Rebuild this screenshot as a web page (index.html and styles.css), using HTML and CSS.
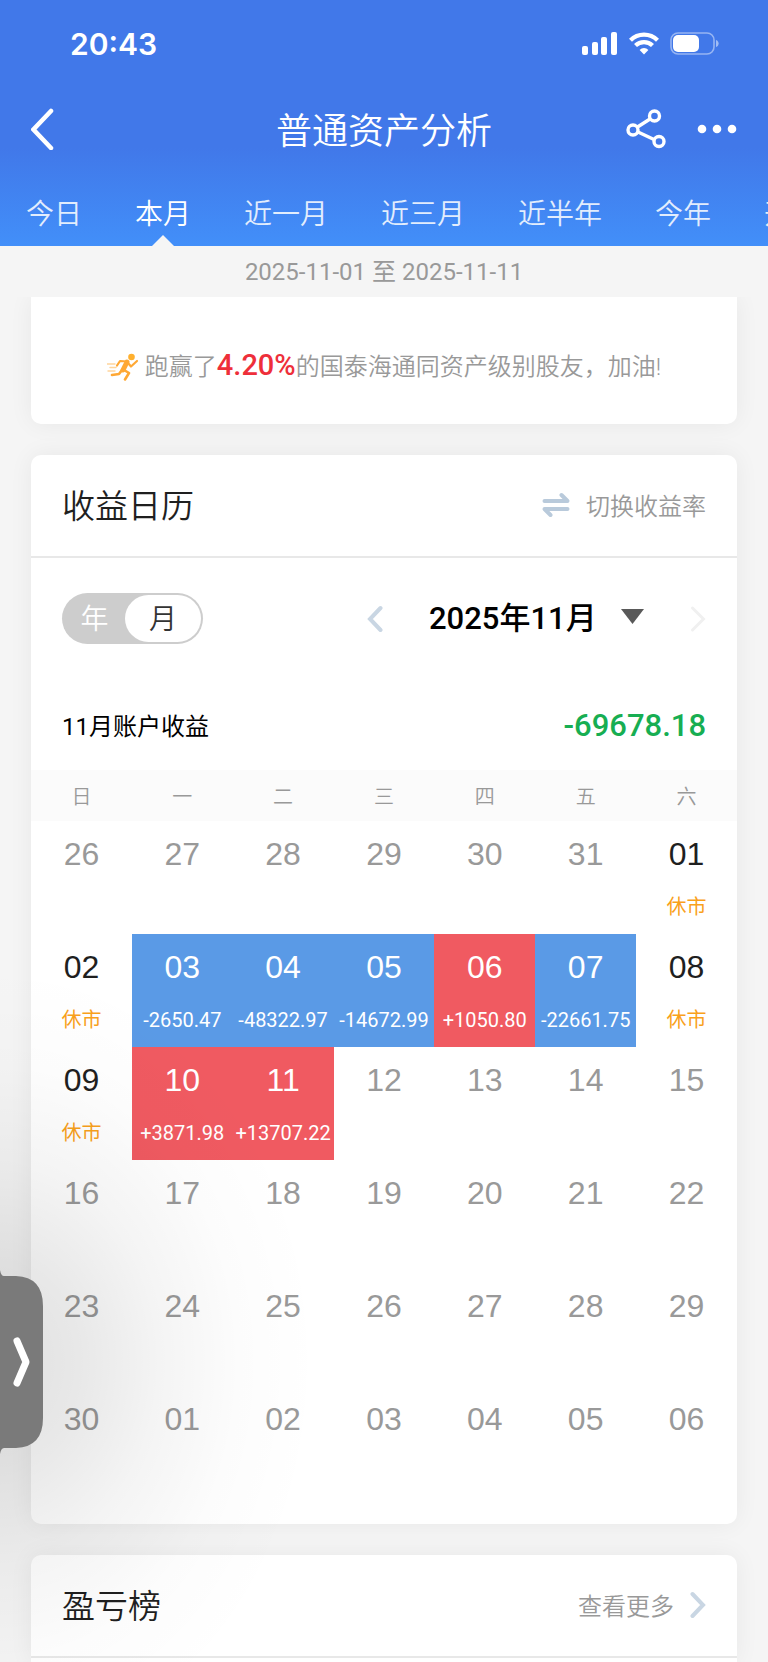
FILE: index.html
```html
<!DOCTYPE html>
<html lang="zh-CN">
<head>
    <meta charset="UTF-8">
    <meta name="viewport" content="width=device-width, initial-scale=1">
    <title>普通资产分析</title>
    <link rel="stylesheet" href="styles.css">
</head>
<body>
    <header class="header">
        <div class="status-bar">
            <span class="time">20:43</span>
            <div class="status-icons">
                <svg width="36" height="24" viewBox="0 0 36 24" fill="#fff">
                    <rect x="0" y="14" width="6" height="9" rx="2"/>
                    <rect x="10" y="10" width="6" height="13" rx="2"/>
                    <rect x="19" y="5" width="6" height="18" rx="2"/>
                    <rect x="29" y="0" width="6" height="23" rx="2"/>
                </svg>
                <svg width="30" height="24" viewBox="0 0 30 24" fill="none" stroke="#fff" stroke-width="4.2">
                    <path d="M1.5 8.2a19 19 0 0 1 27 0"/>
                    <path d="M6.5 13.6a12 12 0 0 1 17 0"/>
                    <path d="M15 22.5l-4.4-4.6a6.3 6.3 0 0 1 8.8 0z" fill="#fff" stroke="none"/>
                </svg>
                <svg width="49" height="24" viewBox="0 0 49 24">
                    <rect x="1" y="1" width="43" height="21" rx="7" fill="none" stroke="#fff" stroke-opacity=".45" stroke-width="1.6"/>
                    <rect x="3" y="3" width="26" height="17" rx="5" fill="#fff"/>
                    <path d="M46 8c3.5 1 3.5 6 0 7z" fill="#fff" fill-opacity=".5"/>
                </svg>
            </div>
        </div>
        <div class="nav-bar">
            <button class="icon-btn nav-back" aria-label="返回">
                <svg width="24" height="42" viewBox="0 0 24 42" fill="none" stroke="#fff" stroke-width="4.5" stroke-linecap="round">
                    <path d="M20 3L2.5 21.5L20 40"/>
                </svg>
            </button>
            <h1 class="title">普通资产分析</h1>
            <div class="nav-actions">
                <button class="icon-btn" aria-label="分享">
                    <svg width="40" height="42" viewBox="0 0 40 42" fill="none" stroke="#fff" stroke-width="3.4">
                        <circle cx="7" cy="22" r="5"/>
                        <circle cx="28.5" cy="8" r="5"/>
                        <circle cx="33" cy="33.5" r="5"/>
                        <path d="M11.5 19L24 11M12 24L28 31.5"/>
                    </svg>
                </button>
                <button class="icon-btn" aria-label="更多">
                    <svg width="40" height="10" viewBox="0 0 40 10" fill="#fff">
                        <circle cx="5" cy="5" r="4.3"/>
                        <circle cx="20" cy="5" r="4.3"/>
                        <circle cx="35" cy="5" r="4.3"/>
                    </svg>
                </button>
            </div>
        </div>
        <nav class="tabs">
            <a href="#" class="tab">今日</a>
            <a href="#" class="tab active">本月</a>
            <a href="#" class="tab">近一月</a>
            <a href="#" class="tab">近三月</a>
            <a href="#" class="tab">近半年</a>
            <a href="#" class="tab">今年</a>
            <a href="#" class="tab">开</a>
        </nav>
    </header>

    <p class="date-range">2025-11-01 至 2025-11-11</p>

    <main class="content">
        <section class="card rank">
            <svg width="32" height="28" viewBox="0 0 32 28" fill="none" stroke="#ffa834" stroke-linecap="round" stroke-linejoin="round">
                <circle cx="24.5" cy="4" r="3.3" fill="#ffb02e" stroke="none"/>
                <path d="M20 9L16 17" stroke-width="5"/>
                <path d="M20 8.5L13 8L10 12.5M21 10L24 13.5L30 8" stroke-width="2.2"/>
                <path d="M15 17L12 21L5 22M17 17L22 20L18 26.5" stroke-width="2.6"/>
                <path d="M0 11h8M3 14.5h6M1 18h7" stroke="#ffd59c" stroke-width="1.4"/>
            </svg>
            <p class="rank-text">跑赢了<strong>4.20%</strong>的国泰海通同资产级别股友，加油!</p>
        </section>

        <section class="card">
            <div class="card-header">
                <h2>收益日历</h2>
                <button class="link-btn">
                    <svg width="28" height="26" viewBox="0 0 28 26" fill="none" stroke="#b9cadb" stroke-width="4" stroke-linecap="round" stroke-linejoin="round">
                        <path d="M2.5 9H25.5L19.5 3M25.5 17H2.5L8.5 23"/>
                    </svg>
                    切换收益率
                </button>
            </div>

            <div class="controls">
                <div class="toggle">
                    <button class="toggle-item">年</button>
                    <button class="toggle-item selected">月</button>
                </div>
                <div class="month-nav">
                    <button class="icon-btn" aria-label="上个月">
                        <svg width="16" height="28" viewBox="0 0 16 28" fill="none" stroke="#c9d6e3" stroke-width="4" stroke-linecap="round">
                            <path d="M13.5 3L3 14L13.5 25"/>
                        </svg>
                    </button>
                    <label class="month-picker">
                        <select class="month-select" aria-label="选择月份">
                            <option>2025年11月</option>
                        </select>
                        <svg width="23" height="20" viewBox="0 0 23 20" fill="#595959">
                            <path d="M0 0h23L11.5 15z"/>
                        </svg>
                    </label>
                    <button class="icon-btn" aria-label="下个月" disabled>
                        <svg width="16" height="28" viewBox="0 0 16 28" fill="none" stroke="#f0f0f0" stroke-width="3" stroke-linecap="round">
                            <path d="M2.5 3L13.5 14L2.5 25"/>
                        </svg>
                    </button>
                </div>
            </div>

            <div class="summary">
                <span class="summary-label">11月账户收益</span>
                <span class="summary-value">-69678.18</span>
            </div>

            <table class="calendar">
                <thead>
                    <tr><th>日</th><th>一</th><th>二</th><th>三</th><th>四</th><th>五</th><th>六</th></tr>
                </thead>
                <tbody>
                    <tr>
                        <td>26</td>
                        <td>27</td>
                        <td>28</td>
                        <td>29</td>
                        <td>30</td>
                        <td>31</td>
                        <td class="closed">01<span>休市</span></td>
                    </tr>
                    <tr>
                        <td class="closed">02<span>休市</span></td>
                        <td class="loss">03<span>-2650.47</span></td>
                        <td class="loss">04<span>-48322.97</span></td>
                        <td class="loss">05<span>-14672.99</span></td>
                        <td class="gain">06<span>+1050.80</span></td>
                        <td class="loss">07<span>-22661.75</span></td>
                        <td class="closed">08<span>休市</span></td>
                    </tr>
                    <tr>
                        <td class="closed">09<span>休市</span></td>
                        <td class="gain">10<span>+3871.98</span></td>
                        <td class="gain">11<span>+13707.22</span></td>
                        <td>12</td>
                        <td>13</td>
                        <td>14</td>
                        <td>15</td>
                    </tr>
                    <tr>
                        <td>16</td>
                        <td>17</td>
                        <td>18</td>
                        <td>19</td>
                        <td>20</td>
                        <td>21</td>
                        <td>22</td>
                    </tr>
                    <tr>
                        <td>23</td>
                        <td>24</td>
                        <td>25</td>
                        <td>26</td>
                        <td>27</td>
                        <td>28</td>
                        <td>29</td>
                    </tr>
                    <tr>
                        <td>30</td>
                        <td>01</td>
                        <td>02</td>
                        <td>03</td>
                        <td>04</td>
                        <td>05</td>
                        <td>06</td>
                    </tr>
                </tbody>
            </table>
        </section>

        <section class="card card-last">
            <div class="card-header">
                <h2>盈亏榜</h2>
                <a href="#" class="link-btn">
                    查看更多
                    <svg width="16" height="28" viewBox="0 0 16 28" fill="none" stroke="#c9d6e3" stroke-width="4" stroke-linecap="round">
                        <path d="M2.5 3L13 14L2.5 25"/>
                    </svg>
                </a>
            </div>
        </section>
    </main>

    <!-- side drawer handle -->
    <div class="drawer-shade"></div>
    <button class="drawer-handle" aria-label="展开">
        <svg width="44" height="184" viewBox="0 0 44 184">
            <path d="M0 0Q1 6 4 6H16Q43 7 43 36V148Q43 177 16 178H4Q1 178 0 184z" fill="#7a7a7a"/>
            <path d="M17 71L26 92L17 113" fill="none" stroke="#fff" stroke-width="7" stroke-linecap="round" stroke-linejoin="round"/>
        </svg>
    </button>
</body>
</html>
```
FILE: styles.css
```css
* {
    box-sizing: border-box;
}

body {
    position: relative;
    margin: 0;
    background-color: #f5f5f5;
    color: #999;
    font-family: Roboto, "Noto Sans CJK SC", sans-serif;
    font-size: 24px;
    font-weight: 350;
    overflow-x: hidden;
}

h1, h2, p {
    margin: 0;
    font-weight: 350;
}

button, select {
    padding: 0;
    border: none;
    background: none;
    color: inherit;
    font: inherit;
    cursor: pointer;
}

a {
    color: inherit;
    text-decoration: none;
}

svg {
    display: block;
}

/* header */
.header {
    background: linear-gradient(#4178e9 0, #4178e9 60%, #428ff9 100%);
    color: #fff;
}

.status-bar {
    display: flex;
    align-items: center;
    justify-content: space-between;
    height: 87px;
    padding: 0 49px 0 70px;
}

.time {
    font-family: Inter, sans-serif;
    font-size: 30px;
    font-weight: 600;
}

.status-icons {
    display: flex;
    gap: 11px;
}

.nav-bar {
    display: grid;
    grid-template-columns: 1fr auto 1fr;
    align-items: center;
    height: 84px;
    padding: 0 31px;
}

.nav-back {
    justify-self: start;
}

.title {
    padding-bottom: 2px;
    font-size: 36px;
}

.nav-actions {
    display: flex;
    align-items: center;
    justify-content: flex-end;
    gap: 31px;
}

.tabs {
    display: flex;
    gap: 53px;
    height: 75px;
    padding-left: 26px;
    overflow: hidden;
    font-size: 28px;
    line-height: 87px;
    white-space: nowrap;
}

.tab {
    position: relative;
    flex: none;
    opacity: 0.85;
}

.tab.active {
    opacity: 1;
}

.tab.active::after {
    content: "";
    position: absolute;
    top: 64px;
    left: 50%;
    margin-left: -11px;
    border: 11px solid transparent;
    border-top: none;
    border-bottom-color: #f5f5f5;
}

.date-range {
    padding-top: 2px;
    font-weight: 400;
    line-height: 49px;
    text-align: center;
}

/* cards */
.content {
    display: flex;
    flex-direction: column;
    gap: 31px;
    padding: 0 31px;
}

.card {
    background-color: #fff;
    border-radius: 10px;
    box-shadow: 0 0 24px rgba(0, 0, 0, 0.06);
}

.rank {
    display: flex;
    align-items: center;
    justify-content: center;
    gap: 6px;
    padding: 46px 0 34px;
    border-radius: 0 0 10px 10px;
    clip-path: inset(0 -31px -31px);
}

.rank-text {
    line-height: 45px;
}

.rank-text strong {
    color: #ee2f3a;
    font-size: 29px;
    font-weight: 500;
}

.card-header {
    display: flex;
    align-items: center;
    justify-content: space-between;
    height: 103px;
    padding: 0 31px 2px;
    border-bottom: 2px solid #e8e8e8;
}

.card-header h2 {
    padding-bottom: 2px;
    color: #1f1f1f;
    font-size: 33px;
}

.link-btn {
    display: flex;
    align-items: center;
    gap: 16px;
}

.card-last {
    padding-bottom: 4px;
    border-radius: 10px 10px 0 0;
}

/* year / month controls */
.controls {
    display: flex;
    align-items: center;
    justify-content: space-between;
    padding: 35px 31px 36px;
}

.toggle {
    display: flex;
    width: 141px;
    height: 51px;
    padding: 2px;
    border-radius: 26px;
    background-color: #cdcdcd;
    font-size: 28px;
}

.toggle-item {
    flex: 1;
    padding-bottom: 3px;
    color: #fff;
}

.toggle-item.selected {
    flex: none;
    width: 76px;
    border-radius: 24px;
    background-color: #fff;
    color: #333;
}

.month-nav {
    display: flex;
    align-items: center;
    gap: 46px;
}

.month-picker {
    display: flex;
    align-items: center;
    gap: 24px;
}

.month-select {
    appearance: none;
    color: #000;
    font-size: 31px;
    font-weight: 500;
    outline: none;
}

.summary {
    display: flex;
    align-items: center;
    justify-content: space-between;
    height: 90px;
    padding: 0 31px;
}

.summary-label {
    padding-bottom: 2px;
    color: #000;
    font-weight: 400;
}

.summary-value {
    color: #17ae52;
    font-size: 31px;
    font-weight: 500;
}

/* calendar */
.calendar {
    width: 100%;
    padding-bottom: 25px;
    border-spacing: 0;
    table-layout: fixed;
    text-align: center;
}

.calendar th {
    height: 51px;
    padding: 0;
    background-color: #fbfbfb;
    font-size: 20px;
    font-weight: 350;
}

.calendar td {
    height: 113px;
    padding: 13px 0 0;
    font-family: "Liberation Sans", sans-serif;
    font-size: 32px;
    font-weight: 400;
    line-height: 40px;
    vertical-align: top;
}

.calendar td span {
    display: block;
    margin-top: 18px;
    font-family: Roboto, "Noto Sans CJK SC", sans-serif;
    font-size: 20px;
    line-height: 30px;
}

.calendar .closed {
    color: #1f1f1f;
}

.calendar .closed span {
    color: #f9a11b;
}

.calendar .loss {
    background-color: #5a9ae6;
    color: #fff;
}

.calendar .gain {
    background-color: #f05a61;
    color: #fff;
}

/* drawer */
.drawer-shade {
    position: absolute;
    left: 0;
    bottom: 0;
    width: 340px;
    height: 700px;
    background: radial-gradient(320px 400px at 0 400px, rgba(0, 0, 0, 0.12), rgba(0, 0, 0, 0.09) 25%, rgba(0, 0, 0, 0.045) 50%, rgba(0, 0, 0, 0.012) 75%, transparent);
    pointer-events: none;
}

.drawer-handle {
    position: absolute;
    left: 0;
    bottom: 208px;
}
```
